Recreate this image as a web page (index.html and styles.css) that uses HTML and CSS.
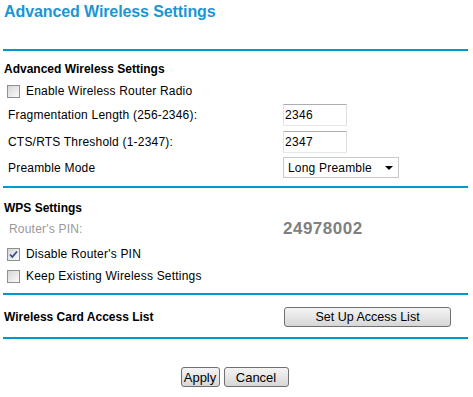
FILE: index.html
```html
<!DOCTYPE html>
<html lang="en">
<head>
  <meta charset="UTF-8" />
  <title>Advanced Wireless Settings</title>
  <link rel="stylesheet" href="styles.css">
</head>
<body>
  <div class="page">
    <h1 class="title">Advanced Wireless Settings</h1>
    <div class="rule"></div>

    <div class="section first">
      <div class="row h22"><span class="heading">Advanced Wireless Settings</span></div>
      <div class="row h22">
        <label class="check"><span class="box"></span>Enable Wireless Router Radio</label>
      </div>
      <div class="row h26">
        <span class="label">Fragmentation Length (256-2346):</span>
        <input class="text" type="text" value="2346">
      </div>
      <div class="row h27">
        <span class="label">CTS/RTS Threshold (1-2347):</span>
        <input class="text" type="text" value="2347">
      </div>
      <div class="row h25">
        <span class="label">Preamble Mode</span>
        <div class="select-wrap">
          <select class="select">
            <option>Long Preamble</option>
            <option>Short Preamble</option>
          </select>
        </div>
      </div>
    </div>
    <div class="rule"></div>

    <div class="section wps">
      <div class="row h23"><span class="heading">WPS Settings</span></div>
      <div class="row h20">
        <span class="label muted">Router's PIN:</span>
        <span class="pin">24978002</span>
      </div>
      <div class="row h30">
        <label class="check"><span class="box"><svg width="11" height="11" viewBox="0 0 11 11"><path d="M2 5.5 L4.3 8 L9 2.5" fill="none" stroke="#2f4a8c" stroke-width="1.7"/></svg></span>Disable Router's PIN</label>
      </div>
      <div class="row h14">
        <label class="check"><span class="box"></span>Keep Existing Wireless Settings</label>
      </div>
    </div>
    <div class="rule"></div>

    <div class="section access">
      <div class="row h41">
        <span class="heading col">Wireless Card Access List</span>
        <button class="btn wide">Set Up Access List</button>
      </div>
    </div>
    <div class="rule"></div>

    <div class="actions">
      <button class="btn apply">Apply</button>
      <button class="btn cancel">Cancel</button>
    </div>
  </div>
</body>
</html>
```

FILE: styles.css
```css
body {
  margin: 0;
  font-family: "Liberation Sans", Arial, sans-serif;
  font-size: 12px;
  letter-spacing: 0.2px;
  color: #000;
  background: #fff;
}

.page {
  padding: 0 5px 0 3px;
}

.title {
  margin: 0;
  height: 49px;
  box-sizing: border-box;
  padding: 2px 0 0 1px;
  font-size: 16px;
  line-height: 20px;
  letter-spacing: -0.1px;
  color: #1a96d4;
}

.rule {
  height: 2px;
  background: #0099cc;
}

.section.first {
  padding: 7px 0 6px;
}

.section.wps {
  padding: 8px 0 10px;
}

.section.access {
  padding-top: 1px;
}

.row {
  display: flex;
  align-items: center;
}

.h14 { height: 14px; }
.h20 { height: 20px; }
.h22 { height: 22px; }
.h23 { height: 23px; }
.h25 { height: 25px; }
.h26 { height: 26px; }
.h27 { height: 27px; }
.h30 { height: 30px; }
.h41 { height: 41px; }

.heading {
  font-weight: bold;
  letter-spacing: 0;
  padding-left: 1px;
}

.heading.col {
  width: 280px;
}

.label {
  width: 275px;
  padding-left: 5px;
}

.muted {
  color: #999;
  padding-left: 6px;
  width: 274px;
}

.pin {
  font-size: 17px;
  font-weight: bold;
  letter-spacing: 0.5px;
  color: #808080;
}

.check {
  display: flex;
  align-items: center;
  padding-left: 4px;
}

.box {
  width: 11px;
  height: 11px;
  border: 1px solid #8e8f8f;
  background: linear-gradient(135deg, #d6d6d6, #fbfbfb);
  margin-right: 6px;
  display: flex;
}

.text {
  width: 64px;
  height: 22px;
  box-sizing: border-box;
  margin: 0;
  padding: 0 1px;
  border: 1px solid;
  border-color: #abadb3 #dbdfe6 #e3e9ef #e2e3ea;
  font: 12px "Liberation Sans", Arial, sans-serif;
  letter-spacing: 0.3px;
  color: #000;
}

.select-wrap {
  position: relative;
}

.select-wrap::after {
  content: "";
  position: absolute;
  right: 6px;
  top: 9px;
  border-left: 4px solid transparent;
  border-right: 4px solid transparent;
  border-top: 4px solid #000;
  pointer-events: none;
}

.select {
  appearance: none;
  width: 116px;
  height: 21px;
  margin: 0;
  padding: 0 0 0 4px;
  border: 1px solid #c6c9ce;
  border-radius: 0;
  background: #fff;
  font: 12px "Liberation Sans", Arial, sans-serif;
  letter-spacing: 0.2px;
  color: #000;
}

.btn {
  height: 20px;
  margin: 0;
  padding: 0;
  border: 1px solid #707070;
  border-radius: 3px;
  background: linear-gradient(#f4f4f4, #e6e6e6 50%, #d6d6d6);
  font: 12.5px "Liberation Sans", Arial, sans-serif;
  color: #000;
}

.btn.wide {
  width: 167px;
}

.actions {
  display: flex;
  justify-content: center;
  gap: 4px;
  padding: 28px 2px 0 0;
}

.btn.apply {
  width: 39px;
  font-size: 13px;
}

.btn.cancel {
  width: 65px;
  font-size: 13px;
}
```
